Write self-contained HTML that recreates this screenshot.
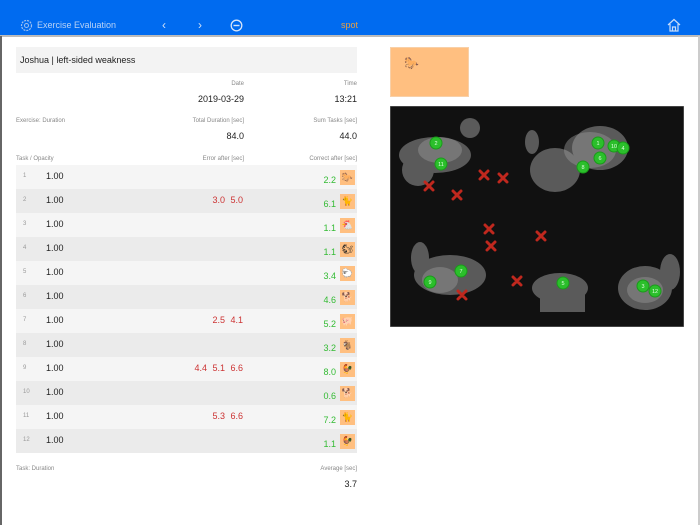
<!DOCTYPE html>
<html><head><meta charset="utf-8"><style>
*{margin:0;padding:0;box-sizing:border-box}
body{width:700px;height:525px;overflow:hidden;background:#fff;font-family:"Liberation Sans",sans-serif;position:relative;color:#222}
.a{position:absolute;white-space:nowrap}
.lbl{font-size:6px;color:#888}
.val{font-size:9px;color:#222}
.r1{right:456px}.r2{right:343px}
.row{position:absolute;left:16px;width:341px;height:24px}
.n{position:absolute;left:7px;top:8px;font-size:6px;color:#999}
.o{position:absolute;left:30px;top:6px;font-size:9px}
.e{position:absolute;right:114px;top:6px;font-size:9px;color:#c33;word-spacing:3px}
.c{position:absolute;right:21px;top:10px;font-size:9px;color:#3b3}
.ic{position:absolute;right:2px;top:5px;width:15px;height:15px;background:#ffbf80;font-size:9px;line-height:15px;text-align:center}
</style></head><body>
<div class="a" style="left:0;top:0;width:700px;height:35px;background:#006bf0"></div>
<div class="a" style="left:0;top:35px;width:700px;height:2px;background:#bbb"></div>
<div class="a" style="left:0;top:36px;width:2px;height:489px;background:#666"></div>
<div class="a" style="left:698px;top:36px;width:2px;height:489px;background:#ccc"></div>
<svg class="a" style="left:20px;top:19px" width="13" height="13" viewBox="0 0 13 13"><circle cx="6.5" cy="6.5" r="5" fill="none" stroke="#9cc0f0" stroke-width="1.2" stroke-dasharray="2 1"/><circle cx="6.5" cy="6.5" r="2" fill="none" stroke="#9cc0f0"/></svg>
<div class="a" style="left:37px;top:20px;font-size:9px;color:#b8d2f5">Exercise Evaluation</div>
<div class="a" style="left:162px;top:18px;font-size:12px;color:#cfe0f8">&lsaquo;</div>
<div class="a" style="left:198px;top:18px;font-size:12px;color:#cfe0f8">&rsaquo;</div>
<svg class="a" style="left:230px;top:19px" width="13" height="13"><circle cx="6.5" cy="6.5" r="5.3" fill="none" stroke="#d6e4f8" stroke-width="1.3"/><line x1="3.5" y1="6.5" x2="9.5" y2="6.5" stroke="#d6e4f8" stroke-width="1.4"/></svg>
<div class="a" style="left:341px;top:20px;font-size:9px;color:#e8a040">spot</div>
<svg class="a" style="left:667px;top:18px" width="14" height="14"><path d="M1 7L7 1.5L13 7M3 6V13H11V6M5.5 13V9H8.5V13" fill="none" stroke="#c8dcf8" stroke-width="1.2"/></svg>

<div class="a" style="left:16px;top:47px;width:341px;height:26px;background:#f3f3f3"></div>
<div class="a" style="left:20px;top:55px;font-size:9px">Joshua | left-sided weakness</div>
<div class="a lbl r1" style="top:81px">Date</div>
<div class="a lbl r2" style="top:81px">Time</div>
<div class="a val r1" style="top:94px">2019-03-29</div>
<div class="a val r2" style="top:94px">13:21</div>
<div class="a lbl" style="left:16px;top:118px">Exercise: Duration</div>
<div class="a lbl r1" style="top:118px">Total Duration [sec]</div>
<div class="a lbl r2" style="top:118px">Sum Tasks [sec]</div>
<div class="a val r1" style="top:131px">84.0</div>
<div class="a val r2" style="top:131px">44.0</div>
<div class="a lbl" style="left:16px;top:156px">Task / Opacity</div>
<div class="a lbl r1" style="top:156px">Error after [sec]</div>
<div class="a lbl r2" style="top:156px">Correct after [sec]</div>

<div class="row" style="top:165px;background:#f5f5f5"><span class="n">1</span><span class="o">1.00</span><span class="c">2.2</span><span class="ic">🐎</span></div>
<div class="row" style="top:189px;background:#ebebeb"><span class="n">2</span><span class="o">1.00</span><span class="e">3.0 5.0</span><span class="c">6.1</span><span class="ic">🐈</span></div>
<div class="row" style="top:213px;background:#f5f5f5"><span class="n">3</span><span class="o">1.00</span><span class="c">1.1</span><span class="ic">🐔</span></div>
<div class="row" style="top:237px;background:#ebebeb"><span class="n">4</span><span class="o">1.00</span><span class="c">1.1</span><span class="ic">🐿</span></div>
<div class="row" style="top:261px;background:#f5f5f5"><span class="n">5</span><span class="o">1.00</span><span class="c">3.4</span><span class="ic">🐑</span></div>
<div class="row" style="top:285px;background:#ebebeb"><span class="n">6</span><span class="o">1.00</span><span class="c">4.6</span><span class="ic">🐕</span></div>
<div class="row" style="top:309px;background:#f5f5f5"><span class="n">7</span><span class="o">1.00</span><span class="e">2.5 4.1</span><span class="c">5.2</span><span class="ic">🐖</span></div>
<div class="row" style="top:333px;background:#ebebeb"><span class="n">8</span><span class="o">1.00</span><span class="c">3.2</span><span class="ic">🐐</span></div>
<div class="row" style="top:357px;background:#f5f5f5"><span class="n">9</span><span class="o">1.00</span><span class="e">4.4 5.1 6.6</span><span class="c">8.0</span><span class="ic">🐓</span></div>
<div class="row" style="top:381px;background:#ebebeb"><span class="n">10</span><span class="o">1.00</span><span class="c">0.6</span><span class="ic">🐕</span></div>
<div class="row" style="top:405px;background:#f5f5f5"><span class="n">11</span><span class="o">1.00</span><span class="e">5.3 6.6</span><span class="c">7.2</span><span class="ic">🐈</span></div>
<div class="row" style="top:429px;background:#ebebeb"><span class="n">12</span><span class="o">1.00</span><span class="c">1.1</span><span class="ic">🐓</span></div>

<div class="a lbl" style="left:16px;top:466px">Task: Duration</div>
<div class="a lbl r2" style="top:466px">Average [sec]</div>
<div class="a val r2" style="top:479px">3.7</div>

<div class="a" style="left:390px;top:47px;width:79px;height:50px;background:#ffbf80;border:1px solid #f8d0a8"></div>
<div class="a" style="left:404px;top:56px;font-size:12px">🐎</div>

<svg class="a" style="left:390px;top:106px" width="294" height="221" viewBox="390 106 294 221">
<rect x="390" y="106" width="294" height="221" fill="#111" stroke="#777"/>
<g fill="#5a5a5a">
<ellipse cx="435" cy="155" rx="36" ry="18"/><ellipse cx="418" cy="170" rx="16" ry="16"/><ellipse cx="470" cy="128" rx="10" ry="10"/>
<ellipse cx="555" cy="170" rx="25" ry="22"/><ellipse cx="600" cy="148" rx="28" ry="22"/><ellipse cx="532" cy="142" rx="7" ry="12"/>
<ellipse cx="450" cy="275" rx="36" ry="20"/><ellipse cx="420" cy="258" rx="9" ry="16"/>
<ellipse cx="560" cy="288" rx="28" ry="15"/><rect x="540" y="292" width="45" height="20"/>
<ellipse cx="645" cy="288" rx="27" ry="22"/><ellipse cx="670" cy="272" rx="10" ry="18"/>
</g>
<g fill="#999" opacity="0.45"><ellipse cx="590" cy="150" rx="26" ry="18"/><ellipse cx="440" cy="150" rx="22" ry="13"/><ellipse cx="440" cy="280" rx="18" ry="13"/><ellipse cx="645" cy="290" rx="18" ry="13"/></g>
<g stroke="#c0281e" stroke-width="3" stroke-linecap="round">
<path d="M425 182l8 8M433 182l-8 8M480 171l8 8M488 171l-8 8M499 174l8 8M507 174l-8 8M453 191l8 8M461 191l-8 8M485 225l8 8M493 225l-8 8M537 232l8 8M545 232l-8 8M487 242l8 8M495 242l-8 8M513 277l8 8M521 277l-8 8M458 291l8 8M466 291l-8 8"/>
</g>
<g fill="#2bbf2b" stroke="#1a9a1a"><circle cx="436" cy="143" r="6"/><circle cx="441" cy="164" r="6"/><circle cx="598" cy="143" r="6"/><circle cx="614" cy="146" r="6"/><circle cx="623" cy="148" r="6"/><circle cx="600" cy="158" r="6"/><circle cx="583" cy="167" r="6"/><circle cx="430" cy="282" r="6"/><circle cx="461" cy="271" r="6"/><circle cx="563" cy="283" r="6"/><circle cx="643" cy="286" r="6"/><circle cx="655" cy="291" r="6"/></g>
<g fill="#dfd" font-size="5.5" text-anchor="middle" font-family="Liberation Sans"><text x="436" y="145">2</text><text x="441" y="166">11</text><text x="598" y="145">1</text><text x="614" y="148">10</text><text x="623" y="150">4</text><text x="600" y="160">6</text><text x="583" y="169">8</text><text x="430" y="284">9</text><text x="461" y="273">7</text><text x="563" y="285">5</text><text x="643" y="288">3</text><text x="655" y="293">12</text></g>
</svg>
</body></html>
